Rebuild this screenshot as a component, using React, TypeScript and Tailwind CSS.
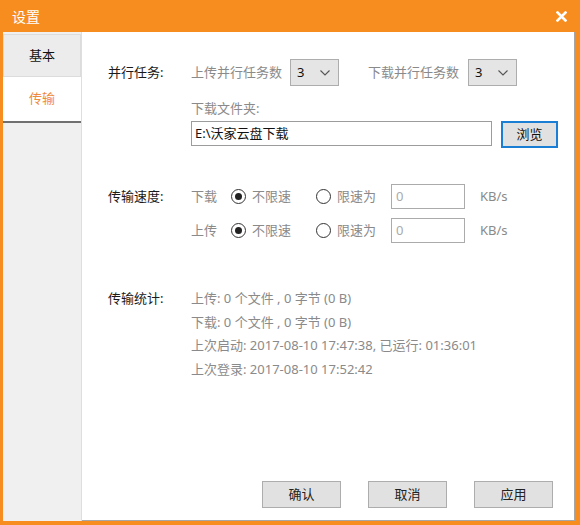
import { ReactNode } from "react";

const font = "font-['Noto_Sans','Noto_Sans_CJK_SC',sans-serif]";

const Select = ({ value }: { value: string }) => (
  <div className="w-[49px] h-[27px] shrink-0 flex items-center justify-between pl-[6px] pr-[8px] bg-[#e5e5e5] border border-[#adadad] text-[#111] text-[13px]">
    <span>{value}</span>
    <svg width="10" height="6" viewBox="0 0 10 6">
      <path d="M0.5 0.5 L5 5 L9.5 0.5" fill="none" stroke="#555" strokeWidth="1.1" />
    </svg>
  </div>
);

const Radio = ({ checked, label }: { checked: boolean; label: string }) => (
  <div className="flex items-center">
    <div className="w-[15px] h-[15px] rounded-full border border-[#333] flex items-center justify-center">
      {checked && <div className="w-[7px] h-[7px] rounded-full bg-[#222]" />}
    </div>
    <span className="ml-[6px]">{label}</span>
  </div>
);

const SpeedRow = ({ name }: { name: string }) => (
  <div className="flex items-center h-[24px]">
    <span className="w-[40px]">{name}</span>
    <div className="w-[85px]">
      <Radio checked label="不限速" />
    </div>
    <div className="w-[75px]">
      <Radio checked={false} label="限速为" />
    </div>
    <div className="w-[74px] h-[25px] border border-[#ababab] flex items-center pl-[4px] text-[#aaa]">0</div>
    <span className="ml-[15px]">KB/s</span>
  </div>
);

const Section = ({ label, children, className }: { label: string; children: ReactNode; className?: string }) => (
  <div className={`flex ${className ?? ""}`}>
    <div className="w-[83px] shrink-0 text-[#1a1a1a]">{label}</div>
    <div className="flex-1">{children}</div>
  </div>
);

const FooterButton = ({ text }: { text: string }) => (
  <button className="w-[79px] h-[27px] bg-[#e1e1e1] border border-[#adadad] text-[#222] text-[13px]">{text}</button>
);

export default function App() {
  const stats = [
    "上传: 0 个文件 , 0 字节 (0 B)",
    "下载: 0 个文件 , 0 字节 (0 B)",
    "上次启动: 2017-08-10 17:47:38, 已运行: 01:36:01",
    "上次登录: 2017-08-10 17:52:42",
  ];

  return (
    <div className={`w-[580px] h-[525px] bg-[#f78d1e] flex flex-col ${font} text-[13px]`}>
      <div className="h-[32px] shrink-0 flex items-center justify-between pl-[12px] pr-[13px] text-white">
        <span className="text-[14px]">设置</span>
        <svg width="11" height="11" viewBox="0 0 11 11">
          <path d="M1.5 1.5 L9.5 9.5 M9.5 1.5 L1.5 9.5" stroke="#fff" strokeWidth="2.6" strokeLinecap="square" />
        </svg>
      </div>

      <div className="flex-1 flex ml-[3px] mr-[5px] mb-[4px] bg-white">
        <div className="w-[79px] shrink-0 bg-[#f0f0f0] border-r border-[#dedede] flex flex-col pt-[2px]">
          <div className="h-[43px] flex items-center justify-center bg-[#ececec] border border-[#dcdcdc] text-[#111]">基本</div>
          <div className="h-[46px] flex items-center justify-center bg-white text-[#f08a3c] border-b-2 border-[#707070]">传输</div>
        </div>

        <div className="flex-1 min-w-0 flex flex-col pl-[26px] pr-[21px] pt-[27px] pb-[12px] border-r border-b border-[#a6a6a6] text-[#8a8a8a]">
          <Section label="并行任务:" className="items-center">
            <div className="flex items-center">
              <span className="w-[99px]">上传并行任务数</span>
              <Select value="3" />
              <span className="ml-[29px] w-[100px]">下载并行任务数</span>
              <Select value="3" />
            </div>
          </Section>

          <div className="ml-[83px] mt-[13px] leading-[18px]">下载文件夹:</div>
          <div className="ml-[83px] mt-[4px] flex items-start">
            <div className="w-[301px] h-[25px] shrink-0 border border-[#9c9c9c] flex items-center pl-[3px] text-[#111]">E:\沃家云盘下载</div>
            <button className="ml-[9px] w-[57px] h-[27px] shrink-0 bg-[#e1e1e1] border-2 border-[#1a7fd4] text-[#111]">浏览</button>
          </div>

          <Section label="传输速度:" className="mt-[36px] leading-[24px]">
            <div className="flex flex-col gap-[10px]">
              <SpeedRow name="下载" />
              <SpeedRow name="上传" />
            </div>
          </Section>

          <Section label="传输统计:" className="mt-[44px] leading-[24px]">
            <div className="flex flex-col">
              {stats.map(s => (
                <div key={s} className="h-[23.7px]">{s}</div>
              ))}
            </div>
          </Section>

          <div className="mt-auto flex justify-end gap-[27px]">
            <FooterButton text="确认" />
            <FooterButton text="取消" />
            <FooterButton text="应用" />
          </div>
        </div>
      </div>
    </div>
  );
}
